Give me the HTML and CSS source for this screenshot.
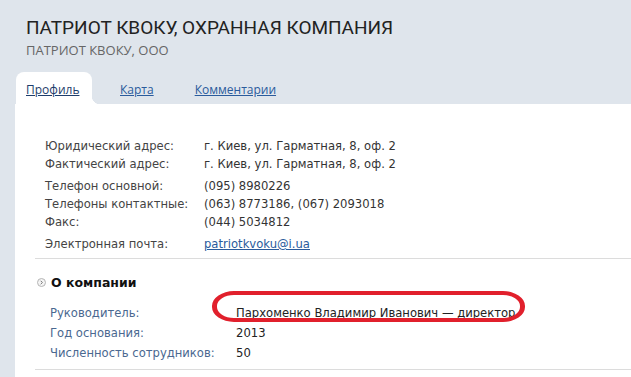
FILE: index.html
```html
<!DOCTYPE html>
<html lang="ru">
<head>
    <meta charset="UTF-8">
    <meta name="viewport" content="width=device-width, initial-scale=1.0">
    <title>ПАТРИОТ КВОКУ</title>
    <link rel="stylesheet" href="styles.css">
</head>
<body>
    <!-- Company header -->
    <div class="header">
        <h1>ПАТРИОТ КВОКУ, ОХРАННАЯ КОМПАНИЯ</h1>
        <p class="subtitle">ПАТРИОТ КВОКУ, ООО</p>
    </div>

    <!-- Tabs -->
    <div class="tabs">
        <a class="tab active" href="#">Профиль</a>
        <a class="tab" href="#">Карта</a>
        <a class="tab" href="#">Комментарии</a>
    </div>

    <div class="panel">
        <!-- Contacts -->
        <div class="contacts">
            <div class="group">
                <span class="label">Юридический адрес:</span><span>г. Киев, ул. Гарматная, 8, оф. 2</span>
                <span class="label">Фактический адрес:</span><span>г. Киев, ул. Гарматная, 8, оф. 2</span>
            </div>
            <div class="group">
                <span class="label">Телефон основной:</span><span>(095) 8980226</span>
                <span class="label">Телефоны контактные:</span><span>(063) 8773186, (067) 2093018</span>
                <span class="label">Факс:</span><span>(044) 5034812</span>
            </div>
            <div class="group">
                <span class="label">Электронная почта:</span><span><a href="#">patriotkvoku@i.ua</a></span>
            </div>
        </div>

        <!-- About section -->
        <div class="about">
            <h2>
                <svg class="bullet" width="9" height="9" viewBox="0 0 9 9">
                    <circle cx="4.5" cy="4.5" r="4" fill="#f4f4f4" stroke="#b5b5b5" stroke-width="1"/>
                    <path d="M3.7 2.8 L5.4 4.5 L3.7 6.2" fill="none" stroke="#777" stroke-width="1"/>
                </svg>
                О компании
            </h2>
            <div class="info">
                <span class="label">Руководитель:</span><span class="highlight">Пархоменко Владимир Иванович — директор</span>
                <span class="label">Год основания:</span><span>2013</span>
                <span class="label">Численность сотрудников:</span><span>50</span>
            </div>
        </div>
    </div>
</body>
</html>
```

FILE: styles.css
```css
body {
    margin: 0;
    background-color: #dfe5ec;
    font-family: "DejaVu Sans", Tahoma, sans-serif;
    font-size: 11.6px;
    color: #333;
}

.header {
    padding: 15px 0 0 26px;
}

h1 {
    margin: 0;
    font-family: Roboto, sans-serif;
    font-weight: normal;
    font-size: 19px;
    line-height: 26px;
    color: #222;
}

.subtitle {
    margin: 1px 0 0;
    font-family: "Open Sans", sans-serif;
    font-size: 13px;
    line-height: 16px;
    color: #666;
}

.tabs {
    display: flex;
    margin: 14px 0 0 16px;
    height: 32px;
    font-family: "Open Sans", sans-serif;
    font-size: 12px;
}

.tab {
    line-height: 36px;
    padding: 0 13px 0 28px;
    color: #2a5b9c;
}

.tab.active {
    position: relative;
    width: 56px;
    padding: 0 10px;
    background-color: #fff;
    border-radius: 8px 8px 0 0;
    color: #1e3d6b;
}

/* inverted corner where the active tab meets the panel */
.tab.active::after {
    content: "";
    position: absolute;
    right: -8px;
    bottom: 0;
    width: 8px;
    height: 8px;
    background: radial-gradient(circle at 100% 0, transparent 8px, #fff 8.5px);
}

.panel {
    margin-left: 15px;
    background-color: #fff;
    padding: 33px 0 60px;
}

.contacts {
    padding-left: 30px;
}

.group {
    display: grid;
    grid-template-columns: 159px auto;
    line-height: 18px;
    margin-bottom: 4px;
}

.contacts .label {
    color: #444;
}

.contacts a {
    color: #2a5b9c;
}

.about {
    margin: 5px 0 0 20px;
    border-top: 1px solid #dcdcdc;
    border-bottom: 1px solid #dcdcdc;
    padding: 16px 0 6px;
}

h2 {
    display: flex;
    align-items: center;
    gap: 5px;
    margin: 0 0 13px 2px;
    font-size: 12.5px;
    line-height: 15px;
    color: #111;
}

.info {
    display: grid;
    grid-template-columns: 186px auto;
    line-height: 20px;
    padding-left: 15px;
}

.info span {
    color: #222;
}

.info .label {
    color: #4a6890;
}

.highlight {
    position: relative;
}

/* red hand-drawn marker around the director */
.highlight::before {
    content: "";
    position: absolute;
    left: -24px;
    top: -12px;
    width: 303px;
    height: 23px;
    border-style: solid;
    border-color: #e1202c;
    border-width: 4px 5px;
    border-radius: 22px / 15px;
}
```
